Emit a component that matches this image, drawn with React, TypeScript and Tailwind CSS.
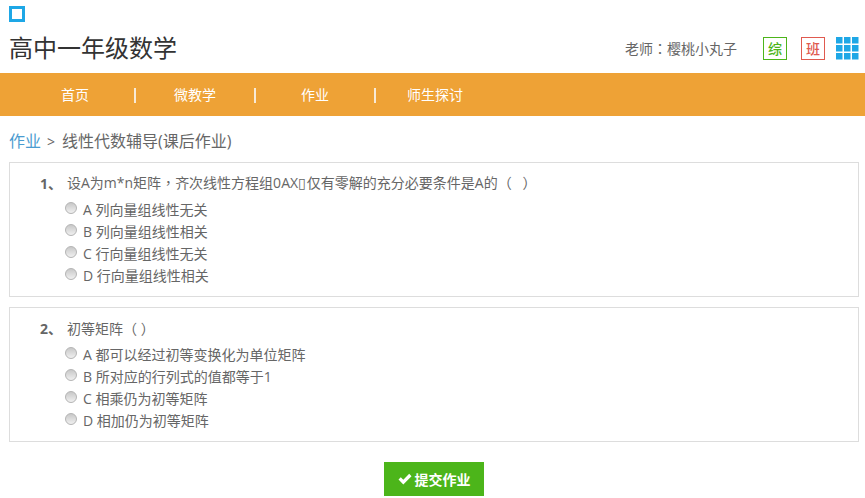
const font = "font-['Open_Sans','Noto_Sans_CJK_SC',sans-serif]";
const tc = "font-['Noto_Sans_CJK_TC',sans-serif]";

const questions = [
  {
    n: "1、",
    title: (
      <>
        设A为m*n矩阵<span className={tc}>，</span>齐次线性方程组0AX
        <span className="font-['DejaVu_Sans',sans-serif] mr-[1px]">▯</span>仅有零解的充分必要条件是A的（&nbsp;&nbsp;&nbsp;）
      </>
    ),
    options: ["A 列向量组线性无关", "B 列向量组线性相关", "C 行向量组线性无关", "D 行向量组线性相关"],
  },
  {
    n: "2、",
    title: <>初等矩阵（&nbsp;）</>,
    options: ["A 都可以经过初等变换化为单位矩阵", "B 所对应的行列式的值都等于1", "C 相乘仍为初等矩阵", "D 相加仍为初等矩阵"],
  },
];

const nav = ["首页", "微教学", "作业", "师生探讨"];

function Question({ q }: { q: (typeof questions)[number] }) {
  return (
    <section className="border border-[#dddddd] h-[135px] pl-[30px] pt-[9px]">
      <div className="flex items-center h-[22px]">
        <span className="w-[27px] text-[14px] font-bold text-[#666666]">{q.n}</span>
        <span className="text-[14px] text-[#666666] whitespace-nowrap">{q.title}</span>
      </div>
      <ul className="mt-[4px] pl-[25px]">
        {q.options.map((o) => (
          <li key={o} className="flex items-center h-[22px] text-[14px] text-[#666666]">
            <span className="w-[12px] h-[12px] rounded-full border border-[#b4b4b4] bg-gradient-to-b from-[#c8c8c8] to-[#f0f0f0] mr-[6px] -mt-[3px]" />
            {o}
          </li>
        ))}
      </ul>
    </section>
  );
}

export default function App() {
  return (
    <div className={`${font} w-[865px] h-[498px] overflow-hidden bg-white`}>
      <header className="h-[73px] px-[9px] pt-[6px]">
        <div className="w-[16px] h-[16px] border-[3px] border-[#1ea7e6]" />
        <div className="flex items-center justify-between mt-[6px] h-[40px]">
          <h1 className="text-[24px] text-[#333333] leading-none">高中一年级数学</h1>
          <div className="flex items-center mr-[-3px]">
            <span className="text-[14px] text-[#666666] mr-[26px]">老师<span className={tc}>：</span>樱桃小丸子</span>
            <span className="w-[24px] h-[23px] border border-[#4db51a] text-[#4db51a] text-[14px] font-medium flex items-center justify-center mr-[14px]">综</span>
            <span className="w-[24px] h-[23px] border border-[#e05a4f] text-[#e05a4f] text-[14px] font-medium flex items-center justify-center mr-[11px]">班</span>
            <svg width="23" height="23" viewBox="0 0 23 23" className="fill-[#1ea7e6]">
              {[0, 8, 16].map((y) =>
                [0, 8, 16].map((x) => <rect key={`${x}-${y}`} x={x} y={y} width="6.5" height="6.5" />)
              )}
            </svg>
          </div>
        </div>
      </header>
      <nav className="h-[43px] bg-[#eea236] flex items-center text-white text-[14px]">
        {nav.map((item, i) => (
          <div key={item} className="w-[120px] flex items-center justify-center relative first:ml-[15px]">
            {item}
            {i < 3 && <span className="absolute right-[-1px] top-[4px] w-[2px] h-[15px] bg-[#f8ead6]" />}
          </div>
        ))}
      </nav>
      <div className="pl-[9px] pr-[6px]">
        <div className="h-[46px] pt-[4px] flex items-center text-[16px] text-[#666666]">
          <span className="text-[#4a9bd0]">作业</span>
          <span className="ml-[6px] mr-[7px] text-[14px]">&gt;</span>
          <span>线性代数辅导(课后作业)</span>
        </div>
        <div className="flex flex-col gap-[10px]">
          {questions.map((q) => (
            <Question key={q.n} q={q} />
          ))}
        </div>
        <div className="flex justify-center mt-[20px]">
          <button className="w-[100px] h-[34px] bg-[#4cb51a] text-white text-[14px] font-bold flex items-center justify-center gap-[3px]">
            <svg width="14" height="14" viewBox="0 0 14 14" className="fill-white">
              <path d="M0.5 7.6 2.8 5.3 5.3 7.8 11.2 1.8 13.5 4.2 5.3 12.4Z" />
            </svg>
            提交作业
          </button>
        </div>
      </div>
    </div>
  );
}
